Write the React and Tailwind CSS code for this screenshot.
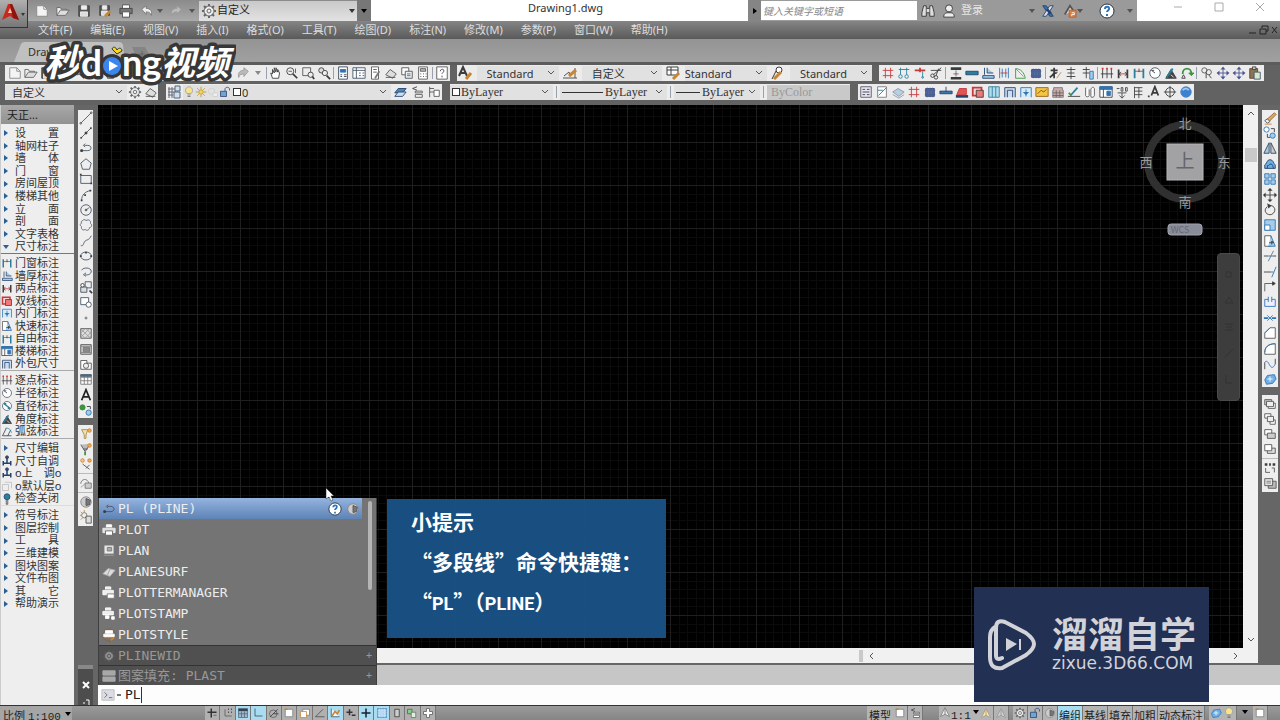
import { useState } from 'react';

const K = '#3c3c3c';
const R = '#c8383a';
const B = '#2f74b5';
const N = '#24426e';
const T = '#2b7f9b';
const G = '#3a9440';
const O = '#c98532';
const L = '#a5cdea';
const W = '#ffffff';

const circle = (x, y, r) => `M${x - r} ${y}a${r} ${r} 0 1 0 ${r * 2} 0a${r} ${r} 0 1 0 ${-r * 2} 0z`;

// each shape: [path, stroke, fill, stroke width]
const ICONS = {
  new: [['M2 2h8l4 4v8H2z', '#888', '#f4f4f4'], ['M10 2v4h4', '#888']],
  open: [['M1 13V4h4l1 2h6v2', '#666', '#eee'], ['M1 13l4-6h10l-4 6z', '#666', '#ddd']],
  save: [['M2 2h12v12H2z', '#444', '#555'], ['M5 2h6v4H5z', '#eee', '#eee'], ['M4 9h8v5H4z', '#eee', '#ddd']],
  saveas: [['M2 2h11v11H2z', '#444', '#555'], ['M5 2h5v4H5z', '#eee', '#eee'], ['M4 8h7v5H4z', '#eee', '#ddd'], ['M8 14l6-6', O, 'none', 3]],
  print: [['M4 5V1h8v4M4 10v5h8v-5', '#555', W], ['M1 5h14v6H1z', '#444', '#777'], ['M4 9h8v6H4z', '#555', W]],
  undo: [['M2 6l5-4v3c5 0 7 3 6 8-1-3-3-4-6-4v3z', '#777', '#eee']],
  redo: [['M14 6L9 2v3c-5 0-7 3-6 8 1-3 3-4 6-4v3z', '#999', '#bbb']],
  gear: [[circle(8, 8, 5), '#666', '#eee', 1], [circle(8, 8, 2), '#666'], ['M8 1v2M8 13v2M1 8h2M13 8h2M3 3l2 2M11 11l2 2M13 3l-2 2M5 11l-2 2', '#666', 'none', 2]],
  binoculars: [['M3 2h3v3h4V2h3l2 8v4h-5v-4H6v4H1v-4z', '#333', '#ddd'], ['M6 5v5M10 5v5']],
  user: [[circle(8, 5, 4), '#333', '#eee'], ['M2 15c0-5 3-5 6-5s6 0 6 5z', '#333', '#eee']],
  exchange: [['M2 2h4l8 12h-4z', N, B], ['M14 2h-4L2 14h4z', N, '#dde'], ['M7 6l4 5', N, 'none', 3]],
  cloud: [['M2 12l6-10 4 6', '#555', '#ddd', 2], ['M7 7h8v8H7z', '#a64', '#e0803a'], ['M10 10h3v2h-3v2', W]],
  help: [[circle(8, 8, 7), '#234', W, 1], ['M6 6c0-3 5-3 4 0 0 1-2 2-2 3M8 11v2', B, 'none', 2]],
  hand: [['M4 14L2 8l2 1V4l2 4V2l2 5V2l2 5V4l2 4-1 6z', K, W]],
  zoom: [[circle(6, 6, 4), K, '#eee'], ['M9 9l5 5', K, 'none', 2], ['M4 6h4M12 3v5']],
  zoomwin: [['M2 2h9v9H2z', '#555'], [circle(11, 10, 3), K, '#eee'], ['M13 12l2 3', K, 'none', 2]],
  zoomprev: [[circle(5, 5, 3), K, '#ddd'], [circle(9, 8, 3), K, '#eee'], ['M11 11l4 4', K, 'none', 2]],
  props: [['M3 1h10v14H3z', '#345', W], ['M5 4h6v3H5z', B, B], ['M5 10h2M9 10h3M5 12h2M9 12h3', '#345']],
  design: [['M1 2h14v12H1z', '#456', W], ['M1 5h14M5 2v12M8 8h2M12 8h2M8 11h2M12 11h2', '#456', 'none', 1]],
  palette: [['M4 1h8v14H4z', '#555', W], ['M6 4h4M6 7h4', '#555'], ['M8 14l5-8', '#777', 'none', 2]],
  sheet: [['M2 10l5-6 7 5-4 5z', '#555', '#ddd'], ['M2 13h11', '#555']],
  markup: [['M2 2h8v8H2z', '#555', W], ['M6 6h8v8H6z', '#555', '#eee'], ['M8 9h4M8 11h4', B]],
  calc: [['M3 1h10v14H3z', '#555', W], ['M5 3h6v3H5z', '#555', '#bbb'], ['M5 9h1M8 9h1M11 9h1M5 12h1M8 12h1M11 12h1', K]],
  boxhelp: [['M2 1h12v14H2z', '#555', W], ['M6 6c0-3 5-3 4 0 0 1-2 2-2 3M8 11v2', K]],
  textstyle: [['M2 11L6 2l4 9M3 8h6', K, 'none', 2], ['M9 14l5-6', O, 'none', 3]],
  dimstyle: [['M1 13h14M2 11l5-4 1 4M13 3v10', '#555'], ['M7 11l7-6', O, 'none', 3]],
  tablestyle: [['M2 2h11v8H2zM2 5h11M6 2v8', K, W], ['M8 14l6-6', O, 'none', 3]],
  leader: [['M2 14l4-8', K], [circle(9, 5, 3), K, W], ['M4 14l7-7', O, 'none', 3]],
  grid: [['M5 2v12M11 2v12M2 5h12M2 11h12', R]],
  axis: [['M2 4h12', R, 'none', 1], ['M4 2v8M11 2v8', T], [circle(4, 12, 2), T], [circle(11, 12, 2), T]],
  axisdel: [['M2 5h12M8 2v5', R, 'none', 2], ['M11 6v7', T], [circle(11, 13, 1), T]],
  scissor: [[circle(4, 11, 2), K], [circle(8, 13, 2), K], ['M5 10l9-8M8 11l3-8M2 5h12', K]],
  wall: [['M2 3h12M2 14h12', K, 'none', 3], ['M8 5v7', T], ['M5 9h6', R]],
  bar: [['M1 6h14v4H1z', N, T]],
  corner: [['M4 2v8M7 2v6h7M2 11h13v3H2z', N, L]],
  span: [['M3 2v12M13 2v12M6 3v10M10 3v10', B], ['M4 8h8', R]],
  arc: [['M3 14V3c6 0 10 5 11 11z', G, '#eee'], ['M3 3l9 9', O]],
  column: [['M3 4h10v9H3z', '#334b7d', '#5168a0'], ['M5 3v11M8 3v11M11 3v11M2 6h12M2 11h12', '#4a5f92']],
  char1: [['M3 5h8M7 2v6c-2 3-3 4-5 5M7 8c1 0 3 0 3-1M7 8v6', K, 'none', 2], ['M10 14l5-7', O]],
  char2: [['M3 4h10M8 1v14M4 8h8M3 12h10', K]],
  char3: [['M2 4h8M6 1v13M2 8h8', K, 'none', 1], ['M10 6h4v9h-4z', B, L]],
  dim3: [['M3 3v11M8 3v11M13 3v11', K], ['M1 9h14', K], ['M3 2v2M8 2v2M13 2v2', R, 'none', 2]],
  dim2: [['M3 4v10M13 4v10', K, 'none', 2], ['M3 9h10', R], ['M6 7l-3 2 3 2M10 7l3 2-3 2', K]],
  dim2b: [['M3 3v11M13 3v11', T, 'none', 2], ['M3 6h10', R], ['M8 3v4', K]],
  radius: [[circle(8, 8, 6), '#456', W], ['M4 5l4 3M4 5l3 0', K]],
  diameter: [[circle(8, 8, 6), '#456', W], ['M4 5l8 6M4 5h3M12 11H9', T, 'none', 2]],
  angle: [['M2 14h12L8 4z', K, '#444'], ['M3 13L10 3', T, 'none', 2], ['M8 10l3 3', W]],
  arcdim: [['M2 13L7 3M9 13l4-8M2 13h12', '#234', 'none', 1], ['M6 3c4-1 7 2 8 6', T]],
  rotate: [['M3 9c0-8 10-8 10 0', G, 'none', 2], ['M13 11l-3-3h6z', G, G], ['M2 14h4l-2-4z', K]],
  chain: [[circle(5, 5, 3), '#555'], [circle(10, 7, 3), '#555'], ['M7 8v6M10 10l3 4', K]],
  moveblue: [['M8 1v14M1 8h14', '#4a5590'], ['M8 1l3 3H5zM8 15l3-3H5zM1 8l3-3v6zM15 8l-3-3v6z', '#4a5590', '#4a5590', 0]],
  paste: [['M2 3h9v11H2z', '#543', '#8b7355'], ['M5 1h4v3H5z', K, '#ccc'], ['M7 7h7v8H7z', '#456', '#d8e8d0']],
  layer: [['M2 5h8M2 8h8M2 11h5M3 3v11M6 3v11', '#667'], ['M9 2h5v5H9zM8 8h6v6H8z', '#567', '#cfe0ee']],
  layerset: [['M2 9l4-5h9l-4 5z', N, '#4b88b8'], ['M2 13l4-5h9l-4 5z', N, '#cde']],
  layerprev: [['M8 2l-5 2 5 2', K], ['M6 7h8v2H6zM6 11h8v3H6z', '#555', W]],
  layerstate: [['M3 2v12M3 4h5M3 8h5', '#555'], ['M8 6h6v7H8z', '#555', W]],
  bulb: [['M5 10C1 5 5 1 8 1s7 4 3 9z', '#999', '#f7e48c'], ['M6 12h4M6 14h4', '#666']],
  sun: [[circle(8, 8, 3), '#b98a1a', '#f5d65c'], ['M8 1v3M8 12v3M1 8h3M12 8h3M3 3l2 2M11 11l2 2M13 3l-2 2M5 11l-2 2', '#b98a1a']],
  freeze: [[circle(6, 7, 4), '#ccc', '#e4e4dc'], ['M8 9h6v5H8z', '#ccc', '#eee']],
  unlock: [['M2 7h8v7H2z', N, '#6fa5cf'], ['M8 7V4c0-3 6-3 6 0v2', N]],
  report: [['M2 2h12v12H2z', '#556', '#e8e8f4'], ['M4 5h3M9 5h3M4 8h8M4 11h3M9 11h3', '#334']],
  editdoc: [['M3 2h10v12H3z', '#777', W], ['M3 6h6M4 12l9-9', T]],
  cloudl: [['M2 8l6-4 7 4-6 5z', '#89a', '#b9cfe0'], ['M2 11l7 4 6-4', '#89a']],
  tee: [['M1 7h14v3H1z', N, '#3f74a8'], ['M8 2v6', N]],
  stair: [['M2 11l3-7h8v7z', R, '#d55'], ['M1 13h14', N, 'none', 3]],
  redbox: [['M2 3h10v9H2z', R, '#f4d8d8', 2], ['M6 6h8v8H6z', K, '#e77']],
  window: [['M2 2h12v12H2zM6 2v12M10 2v12', T, '#b5dcea']],
  door: [['M2 14V3h12v11M5 14V6h6v8', N, '#cde']],
  doorin: [['M2 14V3h12v11M8 5v8', B, '#d5ebf8'], ['M5 8l3 3 3-3', B, B]],
  picture: [['M1 3h14v10H1z', '#965f10', '#f4c443'], ['M3 10l4-4 3 2 3-3', '#7a4d08']],
  brick: [['M3 3h10v3h1v8H2V6h1z', '#777', '#caa'], ['M2 9h12M2 12h12M6 6v8M10 6v8', '#666']],
  level: [['M1 13h14', K], ['M4 12l8-9', T, 'none', 2], ['M2 9l3 3', G, 'none', 2]],
  cyl: [['M3 3v9c0 2 4 2 4 0V5M9 5v8c0 2 4 1 4-1V4c-1-2-3-2-4 1', '#555', W]],
  blueprint: [['M1 2h14v12H1z', K, W], ['M1 2h14v3H1zM9 7h4v5H9z', B, B], ['M5 5v9', K]],
  texthalf: [['M2 4h3M7 3v4h2V3zM12 3v4h2V3zM3 9h10M8 9v6M5 12l3 3 3-3', '#444']],
  flag: [['M4 2v13M4 3h9M4 7h9M4 11h9M9 3v12', '#444']],
  aflag: [['M5 12L9 2l4 10M6 9h6', K, 'none', 2], ['M1 13h2', K, 'none', 2]],
  target: [[circle(8, 8, 5), K], ['M8 1v14M1 8h14', K]],
  globe: [[circle(8, 8, 6), '#4b86c9', '#3b82d2'], ['M4 6c3-3 6-2 7 0', L, 'none', 2]],
  line: [['M2 14L14 2'], [circle(2, 14, 1)], [circle(14, 2, 1)]],
  xline: [['M2 14L14 2'], ['M2 13h1v1H2zM7 7h2v2H7zM13 2h1v1h-1z', K, K]],
  pline: [['M2 11h8c5 0 5-6 0-6H6', '#456'], ['M2 10h2v2H2z', K, K], ['M7 3L5 5l2 2']],
  polygon: [['M8 2l6 5-2 7H4L2 7z', '#456']],
  rect: [['M2 4h12v9H2z', '#456'], ['M1 3h2M13 13h2', K, 'none', 2]],
  arc3: [['M3 14C3 8 7 4 13 3', '#456'], ['M2 13h2v2H2zM6 7h2v2H6zM12 2h2v2h-2z', K, K, 0]],
  circle: [[circle(8, 8, 6), '#456'], [circle(8, 8, 1), K], ['M8 8l4-3']],
  revcloud: [['M4 3c2-2 4-1 4 0 3-2 6 0 5 3 3 2 1 5-1 5 0 3-4 4-5 2-3 2-5-1-4-3C0 8 2 6 3 6 2 5 3 3 4 3z', '#567']],
  spline: [['M2 13c3 2 3-3 5-5s4 0 7-6', '#456']],
  ellipse: [['M2 8c0-6 12-6 12 0s-12 6-12 0z', '#456'], ['M1 7h2v2H1zM13 7h2v2h-2zM7 3h2v2H7z', K, K, 0]],
  elarc: [['M3 6c2-4 11-3 11 1 0 4-5 5-7 4', '#456'], ['M8 9l-3 2 3 2']],
  insert: [['M7 2h7v7H7z', '#456', '#eee'], ['M2 8h7v6H2z', '#456', '#ddd'], [circle(4, 6, 2), K, W], ['M12 12l3 3', K, 'none', 2]],
  block: [['M2 3h9v8H2z', '#456', W], [circle(11, 11, 3), '#456', W]],
  point: [['M7 7h2v2H7z', '#888', '#888']],
  hatch: [['M2 3h12v11H2z', '#555', '#ddd'], ['M2 8l5-5M2 13L12 3M7 14l7-7M11 14l3-3M2 3l11 11M8 3l6 6M2 9l5 5', '#999']],
  gradient: [['M2 3h12v11H2z', '#555', '#ccc'], ['M5 6h7v6H5z', '#777', '#888'], ['M2 5h12M2 12h12', '#888']],
  region: [['M2 4h7v3h5v7H2z', '#555', W], [circle(8, 10, 3), '#555', '#eee']],
  table: [['M2 3h12v11H2zM2 6h12M2 10h12M6 3v11M10 3v11', '#777', W], ['M2 3h12v2H2z', '#567', '#567']],
  mtext: [['M3 14L8 2l5 12M5 10h6', '#222', 'none', 2]],
  addsel: [[circle(4, 5, 3), G, G], [circle(11, 11, 3), B, L], ['M9 4h4v3', K]],
  bulbA: [['M3 3h7l-2 6v4H6V9z', '#a9894b', '#f4dfae'], [circle(12, 4, 2), O, '#f4a94b']],
  bulbB: [['M2 3l5 8 6-9M5 8h5', '#555', '#bbb'], [circle(12, 4, 2), O, '#f4a94b'], ['M7 11v4', G, 'none', 2]],
  bulbC: [[circle(4, 4, 2), O, '#f6c77e'], [circle(12, 4, 2), O, '#f6a94b'], ['M4 8l8 6M12 9l-4 4', '#555']],
  lock2: [['M2 9c0-6 8-7 9-1', '#777'], ['M7 8h7v6H7z', '#777', '#ccc'], ['M2 13l5-4', '#999']],
  sphere: [[circle(8, 8, 6), '#888', '#ccc'], ['M8 4l5 2-1 5-4 1z', '#555', '#777']],
  sunbox: [[circle(6, 6, 3), '#777', '#eee'], ['M6 0v3M1 6h2M2 2l2 2M2 11l2-2', O], ['M8 7h6v8H8z', '#555', '#ddd']],
  erase: [['M4 10l9-8 2 2-8 8z', '#963', '#dca86a'], ['M2 11l3-2 3 3-3 2z', '#555', '#eee'], ['M2 15h8', O]],
  copy: [[circle(4, 4, 3), B, W], [circle(11, 11, 3), B, L], ['M9 3h4v4M5 9v4h3', K]],
  mirror: [['M7 2v12H1z', '#345', L], ['M9 2v12h6z', '#345', '#ccc']],
  offset: [['M2 13V9c2 0 2-6 6-6s4 5 6 6v4z', N, '#6fb0de'], ['M5 13v-3c2 0 2-2 4-2s2 2 3 5', N]],
  array: [['M2 2h5v5H2zM9 2h5v5H9zM2 9h5v5H2zM9 9h5v5H9z', B, L]],
  move: [['M8 1v14M1 8h14', K, 'none', 1], ['M8 0l3 3H5zM8 16l3-3H5zM0 8l3-3v6zM16 8l-3-3v6z', K, K, 0]],
  rot: [['M5 4c-6 5 0 11 5 9 6-3 4-11-3-10', K], ['M5 1l4 2-3 3', K, K]],
  scale: [['M2 2h12v12H2z', B, L], ['M2 8h6v6H2z', B, W]],
  stretch: [['M2 2h7v12H2z', '#555', W], ['M9 2l5 12H6', B, L], ['M7 10h5l-2-2v4', K]],
  trim: [['M1 8h5M11 8h4', K], ['M6 14l6-12', '#678'], ['M6 8h5', B]],
  extend: [['M1 8h8', K], ['M9 8h3', B], ['M10 14l5-12', B]],
  breakat: [['M2 13V4h11', '#555'], ['M11 2l3 2-3 2z', K, K]],
  break: [['M2 13V5h4M10 5h4v8H2', B, '#eef'], ['M6 2v6M10 2v6', B]],
  join: [['M1 8h5M10 8h5', B, 'none', 2], ['M5 5l3 3-3 3M11 5L8 8l3 3', B]],
  chamfer: [['M2 14V8l6-6h6v12z', '#555', W], ['M2 8l6-6', B]],
  fillet: [['M2 14V12C2 6 6 2 14 2v12z', '#555', W], ['M2 12C2 6 6 2 14 2', B]],
  blend: [['M2 14V6M14 2v6', K], ['M2 6c5-6 6 14 12 2', B]],
  explode: [['M2 9l3-5 8-1 2 5-4 5-7 1z', B, '#6fb0e6'], ['M5 8h6M8 5v6', W]],
  front: [['M2 3h8v6H2z', '#555', '#ccc'], ['M6 7h8v6H6z', '#555', W], ['M4 5h8v6H4z', '#555', '#eee']],
  back: [['M2 2h7v5H2zM8 9h6v5H8z', '#555', W], ['M5 5h7v6H5z', '#555', '#eee']],
  above: [['M2 3h8v6H2z', '#555', W], ['M5 7h9v6H5z', '#555', '#ccc']],
  under: [['M5 7h9v6H5z', '#555', '#ddd'], ['M2 3h8v7H2z', '#555', W]],
  textfront: [['M2 4h3M7 4h2M11 4h3', K, 'none', 3], ['M3 8v5h5M10 8h3v5', '#555']],
  hatchback: [['M6 6h9v8H6z', '#555', '#bbb'], ['M2 3h9v8H2z', '#555', '#e4e4e4'], ['M4 6h5M4 8h5', '#777']],
  cross: [['M7 2v12M2 7h12', '#333', 'none', 2], ['M10 11h4', '#555']],
  snap: [['M4 3v9h9', '#555'], ['M8 3h1M12 3h1M8 7h1M12 7h1', '#333', 'none', 2]],
  gridblue: [['M2 2h12v12H2z', '#567', '#9fb6c8'], ['M2 4h12', '#345', 'none', 3], ['M2 9h12M6 6v8M10 6v8', '#567']],
  ortho: [['M4 2v10h10', '#345']],
  polar: [[circle(7, 9, 5), '#555'], ['M3 13L13 3M7 9h7', '#333']],
  osnap: [['M3 3h10v10H3z', '#777', W], ['M2 3h4', O, 'none', 2]],
  osnap3d: [['M5 3h9v8H5z', '#777', W], ['M2 6h8v8H2z', O, W]],
  track: [['M2 13L12 3M2 13h12', '#444']],
  ucs: [['M3 2v11h11', '#345', '#e8f8ff'], ['M4 12l4-6 3 3 3-5', O, 'none', 2]],
  dyn: [['M6 3v8M2 7h8M9 11h5', '#333', 'none', 2]],
  plus: [['M8 2v12M2 8h12', '#123', 'none', 2]],
  dots: [['M2 2h12v12H2z', '#4b86b8', '#9cc6ec'], ['M2 5h12M2 8h12M2 11h12M5 2v12M8 2v12M11 2v12', '#d3e8f8']],
  doc: [['M5 3h6v10H5z', '#333', '#ccc']],
  quick: [['M2 3h6v6H2z', '#555', '#8c8'], ['M7 7h6v7H7z', '#575', '#ded']],
  whiteplus: [['M6 2h4v4h4v4h-4v4H6v-4H2V6h4z', '#555', W]],
  surf: [['M1 10l6-6 8 2-6 7z', '#aaa', '#ddd'], ['M9 5l-3 7', '#999']],
  compass: [['M8 2l6 12-6-3-6 3z', '#777', '#eee'], ['M8 4v7', '#666']],
  compassOn: [['M8 2l6 12-6-3-6 3z', '#999', '#f3e9ae'], ['M8 4v7', O]],
  plan: [['M3 2h10v9H3z', '#bbb', '#eee'], ['M6 4h5v4H6z', '#777', '#aaa'], ['M2 13h12', '#999']],
  printwhite: [['M5 5V2h6v3', W, W], ['M1 6h14v5H1z', '#eee', '#ddd'], ['M4 9h8v5H4z', '#666', W]],
  manager: [['M4 4V1h6v3M1 5h12v5H1z', W, '#eee'], ['M6 9h8v5H6z', '#777', W]],
  stamp: [['M4 4V1h6v3M1 5h12v4H1z', W, '#eee'], ['M4 10h4v3H4zM11 11h3v3h-3z', W, W]],
  printcolor: [[circle(8, 8, 7), '#765', '#8a7055'], ['M4 3h8v3H4zM2 7h12v3H2z', W, W], ['M10 14l4-3', O, 'none', 2]],
  hatchrows: [['M1 2h14v5H1zM1 9h14v5H1z', '#aaa', '#a8a8a8']],
  prompt: [['M1 2h14v12H1z', '#bbb', '#dcdce4'], ['M4 5l3 3-3 3M9 11h4', '#667']],
  adjust: [['M8 3v8M3 11h10M3 8v6M13 8v6', N, 'none', 2], [circle(8, 3, 2), N, '#446']],
  faded: [['M2 6h8v8H2zM5 3h9v8', '#bbb', '#eee']],
  pin: [['M7 9v6h2V9', K], [circle(8, 5, 4), N, T]],
};

function Icon({ name, size = 'size-4' }) {
  return (
    <svg viewBox="0 0 16 16" className={`${size} shrink-0`} aria-hidden="true">
      {ICONS[name].map(([d, stroke = '#555', fill = 'none', width = 1], i) => (
        <path key={i} d={d} stroke={stroke} fill={fill} strokeWidth={width} />
      ))}
    </svg>
  );
}

function IconButton({ name, size }) {
  return (
    <button type="button" aria-label={name} className="flex items-center justify-center shrink-0">
      <Icon name={name} size={size} />
    </button>
  );
}

function IconRow({ names }) {
  return names.map((name, i) =>
    name === '|' ? <span key={i} className="mx-px h-3 w-px shrink-0 bg-gray-400" /> : <IconButton key={i} name={name} size="size-3.5 mx-px" />
  );
}

function Caret({ className = 'text-[#333]' }) {
  return (
    <svg viewBox="0 0 6 4" className={`h-1 w-1.5 shrink-0 ${className}`} aria-hidden="true">
      <path d="M0 0h6L3 4z" fill="currentColor" />
    </svg>
  );
}

function Chevron({ className = '' }) {
  return (
    <svg viewBox="0 0 8 8" className={`size-2 shrink-0 ${className}`} aria-hidden="true">
      <path d="M1 2l3 3 3-3" fill="none" stroke="#555" strokeWidth="1" />
    </svg>
  );
}

function Drop({ label, value, width, lead, font = '', muted = false }) {
  return (
    <div className={`flex h-[15px] shrink-0 items-center pr-1 ${width} ${muted ? 'bg-[#c9c9c9] text-[#999]' : 'bg-[#e1e1e1] text-[#333]'}`}>
      {lead}
      <select aria-label={label} disabled={muted} className={`min-w-0 flex-1 appearance-none bg-transparent leading-[15px] outline-none ${font}`}>
        <option>{value}</option>
      </select>
      {!muted && <Chevron />}
    </div>
  );
}

const MENUS = ['文件(F)', '编辑(E)', '视图(V)', '插入(I)', '格式(O)', '工具(T)', '绘图(D)', '标注(N)', '修改(M)', '参数(P)', '窗口(W)', '帮助(H)'];

function TitleBar() {
  return (
    <header className="flex h-[21px] shrink-0 bg-white text-[11px]">
      <div className="flex w-[371px] shrink-0 items-center bg-linear-to-b from-[#8b8b8b] to-[#a9a9a9] pl-[31px]">
        {['new', 'open', 'save', 'saveas', 'print', 'undo'].map((name) => (
          <span key={name} className="flex w-[21px] justify-center">
            <IconButton name={name} size="size-3.5" />
          </span>
        ))}
        <Caret className="text-[#555]" />
        <span className="flex w-[26px] justify-center"><IconButton name="redo" size="size-3.5" /></span>
        <Caret className="text-[#555]" />
        <div className="ml-1 flex h-5 flex-1 items-center bg-linear-to-b from-[#c9c9c9] to-[#e2e2e2] px-0.5">
          <Icon name="gear" />
          <select aria-label="工作空间" className="min-w-0 flex-1 appearance-none bg-transparent text-[#222] outline-none">
            <option>自定义</option>
          </select>
          <Caret />
        </div>
        <button type="button" aria-label="自定义快速访问工具栏" className="flex h-full w-3.5 items-center justify-center bg-[#777]">
          <Caret className="text-black" />
        </button>
      </div>
      <h1 className="flex-1 pl-3 text-center leading-4 text-[#333]">Drawing1.dwg</h1>
      <div className="flex w-[389px] shrink-0 items-center bg-[#9a9a9a]">
        <span className="flex h-full w-[13px] items-center justify-center bg-[#858585]">
          <svg viewBox="0 0 4 6" className="h-1.5 w-1"><path d="M0 0v6l4-3z" /></svg>
        </span>
        <input aria-label="搜索" placeholder="键入关键字或短语" className="h-[19px] w-[156px] bg-white px-0.5 text-[10px] italic outline-none placeholder:text-[#888]" />
        <div className="flex flex-1 items-center pl-0.5">
          <span className="flex w-[17px] justify-center"><IconButton name="binoculars" size="size-3.5" /></span>
          <span className="flex w-[25px] justify-center"><IconButton name="user" size="size-3.5" /></span>
          <button type="button" className="text-[#e8e8e8]">登录</button>
          <span className="flex-1" />
          <Caret className="text-[#555]" />
          <span className="ml-1.5 flex gap-2">
            <IconButton name="exchange" size="size-3.5" />
            <IconButton name="cloud" size="size-3.5" />
          </span>
          <Caret className="text-[#555]" />
          <span className="mx-3 ml-4 flex"><IconButton name="help" size="size-4" /></span>
          <Caret className="mr-1 text-[#555]" />
        </div>
      </div>
      <div className="grid w-[143px] shrink-0 grid-cols-3 pl-5">
        {['M1 5h8', 'M1 1h8v8H1z', 'M1 1l8 8M9 1l-8 8'].map((d, i) => (
          <button key={d} type="button" aria-label={['最小化', '最大化', '关闭'][i]} className="flex h-3.5 items-center justify-center">
            <svg viewBox="0 0 10 10" className="size-2.5"><path d={d} fill="none" stroke="#aaa" /></svg>
          </button>
        ))}
      </div>
    </header>
  );
}

function MenuBar() {
  return (
    <nav className="flex h-[18px] shrink-0 items-center gap-[18px] bg-linear-to-b from-[#858585] to-[#5a5a5a] pl-[38px] text-[11px] text-[#dedede]">
      {MENUS.map((menu) => (
        <button key={menu} type="button" className="leading-4 whitespace-nowrap">{menu}</button>
      ))}
      <svg viewBox="0 0 32 10" className="mr-px ml-auto h-2.5 w-8" aria-hidden="true">
        <path d="M2 8h7M13 4h6v5h-6zM15 3V1h6v5h-2M25 2l5 6M30 2l-5 6" fill="none" stroke="#222" strokeWidth="1" />
      </svg>
    </nav>
  );
}

function ChannelLogo() {
  return (
    <svg viewBox="0 0 200 52" className="pointer-events-none absolute top-9 left-9 z-40 h-[52px] w-[200px]" aria-hidden="true">
      <g
        className="italic"
        fontFamily="'Noto Sans CJK SC', sans-serif"
        fontWeight="700"
        fill="#fff"
        stroke="#373737"
        strokeWidth="7"
        strokeLinejoin="round"
        paintOrder="stroke"
      >
        <text x="8" y="40" fontSize="37">秒</text>
        <text x="125" y="39" fontSize="34">视频</text>
      </g>
      <g fontFamily="Lato, sans-serif" fontWeight="700" fill="#fff" stroke="#373737" strokeWidth="7" strokeLinejoin="round" paintOrder="stroke">
        <text x="45" y="40" fontSize="37">d</text>
        <text x="86" y="40" fontSize="36">ng</text>
      </g>
      <circle cx="76" cy="30" r="12" fill="#373737" />
      <circle cx="76" cy="30" r="9" fill="#3a86ee" />
      <path d="M73 25v10l9-5z" fill="#fff" />
      <path d="M81 18l-5-5c1-3 4-2 5 1 2-3 5-2 5 1z" fill="#f7d81e" stroke="#373737" />
    </svg>
  );
}

function FileTabs() {
  return (
    <div className="flex h-[26px] shrink-0 items-end border-b-[3px] border-[#5c5c5c] bg-linear-to-b from-[#949494] to-[#a0a0a0] text-[11px]">
      <div className="relative flex h-5 w-[125px] items-center">
        <svg viewBox="0 0 125 20" preserveAspectRatio="none" className="absolute inset-0 size-full">
          <path d="M14 20L21 2Q22 0 25 0H119Q122 0 123 3L125 20z" fill="#c0c0c0" />
        </svg>
        <button type="button" className="relative pl-7 text-[#333]">Drawing1</button>
      </div>
      <svg viewBox="0 0 24 16" className="ml-1.5 h-4 w-6"><path d="M1 1h13l8 14H7z" fill="#858585" /><path d="M11 5v6M8 8h6" stroke="#666" /></svg>
    </div>
  );
}

const BAR = 'flex h-4 shrink-0 items-center bg-[#ececec]';

function Toolbars() {
  return (
    <div className="flex shrink-0 flex-col gap-[3px] bg-[#626262] pb-[5px] font-['Noto_Sans','Noto_Sans_CJK_SC',sans-serif] text-[11px]">
      <div className="flex gap-[7px] pl-[5px]">
        <div className={`${BAR} w-[445px] pl-0.5`}>
          <IconRow names={['new', 'open', 'save', 'print', 'zoom', 'sheet', 'hand']} />
          <span className="flex-1" />
          <IconRow names={['redo']} />
          <Caret className="mx-1 text-[#888]" />
          <IconRow names={['|', 'hand', 'zoom', 'zoomwin', 'zoomprev', '|', 'props', 'design', 'palette', 'sheet', 'markup', 'calc', '|', 'boxhelp']} />
        </div>
        <div className={`${BAR} w-[415px] justify-between`}>
          <Icon name="textstyle" />
          <Drop label="文字样式" value="Standard" width="w-[82px]" font="pl-2.5" />
          <Icon name="dimstyle" />
          <Drop label="标注样式" value="自定义" width="w-[80px]" font="pl-2.5" />
          <Icon name="tablestyle" />
          <Drop label="表格样式" value="Standard" width="w-[82px]" />
          <Icon name="leader" />
          <Drop label="多重引线样式" value="Standard" width="w-[82px]" font="pl-2.5" />
        </div>
        <div className={`${BAR} w-[385px] justify-between px-px`}>
          <IconRow names={['grid', 'axis', 'axisdel', 'scissor', '|', 'wall', 'bar', 'corner', 'span', 'arc', 'column', '|', 'char1', 'char2', 'char3', '|', 'dim3', 'dim2', 'dim2b', 'radius', 'angle', 'rotate', '|', 'chain', 'moveblue', 'moveblue', 'paste']} />
        </div>
      </div>
      <div className="flex pl-[5px]">
        <div className={`${BAR} w-[153px]`}>
          <Drop label="工作空间" value="自定义" width="w-[122px]" font="pl-[7px]" />
          <IconRow names={['gear', 'sheet']} />
        </div>
        <div className={`${BAR} ml-2 w-[276px] gap-px`}>
          <Icon name="layer" />
          <Drop
            label="图层"
            value="0"
            width="flex-1"
            font="pl-px"
            lead={
              <>
                {['bulb', 'sun', 'freeze', 'unlock'].map((name) => <Icon key={name} name={name} size="size-3" />)}
                <span className="ml-0.5 size-2 border border-[#333] bg-white" />
              </>
            }
          />
          <IconRow names={['layerset', 'layerprev', 'layerstate']} />
        </div>
        <div className={`${BAR} ml-2 w-[400px] justify-between font-['Liberation_Serif',serif] text-xs`}>
          <Drop label="颜色" value="ByLayer" width="w-[103px]" font="pl-px" lead={<span className="ml-0.5 size-2 shrink-0 border border-[#333] bg-white" />} />
          <span className="h-3 w-px bg-gray-400" />
          <Drop label="线型" value="ByLayer" width="w-[107px]" font="pl-0.5" lead={<span className="ml-0.5 h-px w-[41px] bg-[#333]" />} />
          <span className="h-3 w-px bg-gray-400" />
          <Drop label="线宽" value="ByLayer" width="w-[86px]" font="pl-0.5" lead={<span className="ml-0.5 h-px w-6 bg-[#333]" />} />
          <span className="h-3 w-px bg-gray-400" />
          <Drop label="打印样式" value="ByColor" width="w-[83px]" font="pl-1" muted />
        </div>
        <div className={`${BAR} ml-2`}>
          <IconRow names={['report', 'editdoc', 'cloudl', 'grid', 'column', 'tee', 'stair', 'redbox', 'window', 'door', 'doorin', 'picture', 'brick', 'level', 'cyl', 'blueprint', 'texthalf', 'flag', 'aflag', 'target', 'globe']} />
        </div>
      </div>
    </div>
  );
}

const SIDE_GROUPS = [
  {
    height: 'h-[127px]',
    line: 'border-b border-[#777]',
    items: ['设　　置', '轴网柱子', '墙　　体', '门　　窗', '房间屋顶', '楼梯其他', '立　　面', '剖　　面', '文字表格', '尺寸标注'],
    icons: [],
  },
  {
    height: 'h-[114px]',
    line: 'border-b border-[#aaa]',
    items: ['门窗标注', '墙厚标注', '两点标注', '双线标注', '内门标注', '快速标注', '自由标注', '楼梯标注', '外包尺寸'],
    icons: ['dim2b', 'corner', 'dim2', 'redbox', 'doorin', 'stretch', 'dim2b', 'blueprint', 'door'],
  },
  {
    height: 'h-[65px]',
    line: 'border-b border-[#aaa]',
    items: ['逐点标注', '半径标注', '直径标注', '角度标注', '弧弦标注'],
    icons: ['dim3', 'radius', 'diameter', 'angle', 'arcdim'],
  },
  {
    height: 'h-[64px]',
    line: 'border-b border-[#ddd]',
    items: ['尺寸编辑', '尺寸自调', 'o上　调o', 'o默认层o', '检查关闭'],
    icons: [null, 'adjust', 'adjust', 'faded', 'pin'],
  },
  {
    height: 'h-[101px]',
    line: '',
    items: ['符号标注', '图层控制', '工　　具', '三维建模', '图块图案', '文件布图', '其　　它', '帮助演示'],
    icons: [],
  },
];

function SidePanel() {
  return (
    <aside className="flex w-[74px] shrink-0 flex-col border-l border-[#ccc] bg-[#eeeeee] text-[11px] text-[#333]">
      <h2 className="h-[19px] bg-linear-to-b from-[#a8a8a8] to-[#929292] pl-1.5 leading-[19px] text-[#222]">天正...</h2>
      <div className="flex flex-col gap-[3px] pt-[3px]">
        {SIDE_GROUPS.map((group) => (
          <ul key={group.height} className={`grid auto-rows-fr ${group.height} ${group.line}`}>
            {group.items.map((item, i) => (
              <li key={item} className="min-h-0">
                <button type="button" className="flex h-full items-center whitespace-nowrap">
                  <span className="flex w-[14px] shrink-0">
                    {group.icons[i] ? (
                      <Icon name={group.icons[i]} size="size-3" />
                    ) : (
                      <svg viewBox="0 0 6 6" className="ml-0.5 size-1.5">
                        <path d={item === '尺寸标注' ? 'M0 1h6L3 5z' : 'M1 0v6l4-3z'} fill="#2a5f94" />
                      </svg>
                    )}
                  </span>
                  {item}
                </button>
              </li>
            ))}
          </ul>
        ))}
      </div>
    </aside>
  );
}

const DRAW_TOOLS = ['line', 'xline', 'pline', 'polygon', 'rect', 'arc3', 'circle', 'revcloud', 'spline', 'ellipse', 'elarc', 'insert', 'block', 'point', 'hatch', 'gradient', 'region', 'table', 'mtext', 'addsel'];
const MODIFY_TOOLS = ['erase', 'copy', 'mirror', 'offset', 'array', 'move', 'rot', 'scale', 'stretch', 'trim', 'extend', 'breakat', 'break', 'join', 'chamfer', 'fillet', 'blend', 'explode'];

function ToolColumn({ names, height }) {
  return (
    <div className={`grid auto-rows-fr justify-items-center bg-[#eeeeee] ${height}`}>
      {names.map((name) => <IconButton key={name} name={name} size="size-3.5" />)}
    </div>
  );
}

function ToolStack({ groups }) {
  return (
    <div className="flex flex-col bg-[#eeeeee]">
      {groups.map((group, i) => (
        <div key={i} className={`flex flex-col items-center gap-px py-0.5 ${i > 0 ? 'border-t border-[#bbb]' : ''}`}>
          {group.map((name) => <IconButton key={name} name={name} size="size-3.5" />)}
        </div>
      ))}
    </div>
  );
}

function ViewCube() {
  return (
    <svg viewBox="0 0 94 120" className="absolute top-[11px] right-[11px] h-[120px] w-[94px]" fontFamily="'Noto Sans CJK SC', sans-serif" textAnchor="middle">
      <circle cx="47" cy="46" r="37" fill="none" stroke="#303030" strokeWidth="8" />
      <g fill="#989898" fontSize="13">
        <text x="47" y="12">北</text>
        <text x="86" y="51">东</text>
        <text x="47" y="91">南</text>
        <text x="8" y="51">西</text>
      </g>
      <rect x="29" y="28" width="36" height="36" fill="#a2a2a4" stroke="#b6b6b8" />
      <text x="47" y="52" fontSize="19" fill="#66666a">上</text>
      <rect x="30" y="108" width="34" height="11" rx="3" fill="#898c99" stroke="#a2a4ad" />
      <text x="42" y="117" fontSize="9" fill="#666873">WCS</text>
    </svg>
  );
}

function Canvas() {
  return (
    <main className="relative min-w-0 flex-1 overflow-hidden bg-black">
      <svg className="absolute inset-0 size-full" aria-hidden="true">
        <defs>
          <pattern id="grid" x="13" y="37" width="43" height="43" patternUnits="userSpaceOnUse">
            <path d="M9 0v43M17 0v43M26 0v43M34 0v43M0 9h43M0 17h43M0 26h43M0 34h43" stroke="#0b0b0b" shapeRendering="crispEdges" />
            <path d="M0 0v43M0 0h43" stroke="#1f1f1f" strokeWidth="2" shapeRendering="crispEdges" />
          </pattern>
        </defs>
        <rect width="100%" height="100%" fill="url(#grid)" />
      </svg>
      <ViewCube />
      <div className="absolute top-[148px] right-[3px] flex h-[148px] w-[23px] flex-col items-center justify-around rounded-sm border border-[#4a4a4a] bg-[#3d3d3d] py-2">
        {['M3 3h5v5H3z', 'M2 8l4-6 4 6z', 'M2 3h8M3 6h6M2 9h8', 'M2 10l8-8', 'M3 2v8h6'].map((d) => (
          <svg key={d} viewBox="0 0 12 12" className="size-3"><path d={d} fill="none" stroke="#323232" /></svg>
        ))}
      </div>
      <section lang="zh-CN" className="absolute bottom-[10px] left-[289px] h-[139px] w-[279px] bg-[#1a5288]/95 pt-0.5 pl-6 font-['Noto_Sans_CJK_SC',sans-serif] text-[21px] leading-10 font-bold whitespace-nowrap text-white">
        <p>小提示</p>
        <p>“多段线”命令快捷键：</p>
        <p>
          “<span className="font-['Roboto',sans-serif] text-lg">PL</span>”（<span className="font-['Roboto',sans-serif] text-lg">PLINE</span>）
        </p>
      </section>
      <svg viewBox="0 0 10 14" className="absolute bottom-[146px] left-[227px] z-30 h-3.5 w-2.5" aria-hidden="true">
        <path d="M1 0v11l3-2 2 4 2-1-2-4h3z" fill="#fff" stroke="#222" strokeWidth="0.5" />
      </svg>
    </main>
  );
}

const SUGGESTIONS = [
  { icon: 'printwhite', text: 'PLOT' },
  { icon: 'plan', text: 'PLAN' },
  { icon: 'surf', text: 'PLANESURF' },
  { icon: 'manager', text: 'PLOTTERMANAGER' },
  { icon: 'stamp', text: 'PLOTSTAMP' },
  { icon: 'printcolor', text: 'PLOTSTYLE' },
];

function CommandLine() {
  const [command, setCommand] = useState('PL');

  return (
    <div className="relative flex h-5 shrink-0 items-center bg-[#fdfdfd] pl-[3px] font-['DejaVu_Sans_Mono','Noto_Sans_CJK_SC',monospace] text-[13px]">
      <Icon name="prompt" size="size-3.5" />
      <span className="ml-0.5 h-0.5 w-1 bg-[#777]" />
      <div className="ml-1 flex h-full flex-1 items-center">
        <input aria-label="命令" value={command} onChange={(e) => setCommand(e.target.value)} className="w-4 bg-transparent text-[#222] outline-none" />
        <span className="h-4 w-px bg-[#333]" />
      </div>
      <div className="absolute bottom-full left-0 z-20 w-[279px] border-x border-[#3f3f3f] bg-[#747474] text-[#ededed]">
        <div className="flex">
          <ul className="flex-1">
            <li className="flex h-[21px] items-center gap-0.5 bg-linear-to-b from-[#94b4e0] to-[#5e83b5] pr-0.5 pl-[3px]">
              <Icon name="pline" size="size-3.5" />
              <button type="button" className="flex-1 text-left">PL (PLINE)</button>
              <IconButton name="help" size="size-3.5 mr-0.5" />
              <IconButton name="sphere" size="size-3.5" />
            </li>
            {SUGGESTIONS.map((row) => (
              <li key={row.text} className="flex h-[21px] items-center gap-0.5 pl-[3px]">
                <Icon name={row.icon} size="size-3.5" />
                <button type="button">{row.text}</button>
              </li>
            ))}
          </ul>
          <div className="w-3.5 pt-[3px] pl-1.5">
            <div className="h-[89px] w-1 rounded-sm bg-[#b5b5b5]" />
          </div>
        </div>
        <button type="button" className="flex h-5 w-full items-center gap-0.5 border-t border-[#333] bg-[#505050] pr-1 pl-[3px] text-[#989898]">
          <Icon name="gear" size="size-3.5 opacity-40" />
          <span className="flex-1 text-left">PLINEWID</span>
          <span className="text-[10px]">+</span>
        </button>
        <button type="button" className="flex h-5 w-full items-center gap-0.5 border-t border-[#333] bg-[#505050] pr-1 pl-[3px] text-[#989898]">
          <Icon name="hatchrows" size="size-3.5" />
          <span className="flex-1 text-left">图案填充: PLAST</span>
          <span className="text-[10px]">+</span>
        </button>
      </div>
    </div>
  );
}

const MODES = [
  ['cross'], ['snap'], ['gridblue', true], ['ortho', true], ['polar'], ['osnap'], ['osnap3d'], ['track'],
  ['ucs', true], ['dyn'], ['plus', true], ['dots', true], ['doc'], ['quick'], ['whiteplus'],
];

function StatusBar() {
  const cell = 'flex h-full shrink-0 items-center border-r border-[#777] bg-[#b4b4b4] px-[1px]';
  return (
    <footer className="flex h-[15px] shrink-0 items-start overflow-hidden border-t border-[#333] bg-linear-to-b from-[#9a9a9a] to-[#858585] text-[11px] leading-5 text-[#222]">
      <button type="button" className="flex h-full w-[72px] shrink-0 items-start gap-1 bg-[#a5a5a5] pl-[3px] whitespace-nowrap">
        <span>比例 <span className="font-['Liberation_Mono',monospace]">1:100</span></span>
        <span className="flex pt-1.5"><Caret className="text-black" /></span>
      </button>
      <div className="ml-[133px] grid h-full w-[231px] grid-cols-15">
        {MODES.map(([name, on]) => (
          <button key={name} type="button" aria-label={name} className={`flex h-full items-center justify-center border-r border-[#777] ${on ? 'bg-[#a9dcf0]' : 'bg-[#b0b0b0]'}`}>
            <Icon name={name} size="size-3" />
          </button>
        ))}
      </div>
      <span className="flex-1" />
      <button type="button" className="h-full shrink-0 bg-[#b4b4b4] px-0.5 leading-5">模型</button>
      <span className={cell}><Icon name="osnap" size="size-3" /></span>
      <span className={`${cell} mr-4`}><Icon name="layerprev" size="size-3" /></span>
      <button type="button" className="flex h-full w-10 items-start bg-[#b4b4b4]">
        <Icon name="compass" size="size-3" />
        <span className="font-['Liberation_Mono',monospace]">1:1</span>
        <span className="flex pt-1 pl-0.5"><Caret className="text-black" /></span>
      </button>
      <span className={cell}><Icon name="compassOn" size="size-3" /></span>
      <span className={`${cell} mr-1`}><Icon name="compass" size="size-3 opacity-50" /></span>
      <span className={cell}><Icon name="gear" size="size-3" /></span>
      <span className={cell}><Icon name="unlock" size="size-3" /></span>
      <span className={cell}><Icon name="sphere" size="size-3" /></span>
      {['编组', '基线', '填充', '加粗', '动态标注'].map((name, i) => (
        <button key={name} type="button" className={`h-full shrink-0 border-r border-[#777] px-px leading-5 ${i === 0 ? 'bg-[#a9dcf0]' : 'bg-[#b4b4b4]'}`}>{name}</button>
      ))}
      <span className={`${cell} ml-1 gap-px`}><Icon name="explode" size="size-3" /><Icon name="bulb" size="size-3" /></span>
      <span className="flex w-4 justify-center pt-1"><Caret className="text-black" /></span>
      <span className={`${cell} mr-3`}><Icon name="osnap" size="size-3" /></span>
    </footer>
  );
}

function Watermark() {
  return (
    <div className="absolute right-[71px] bottom-[18px] z-50 flex h-[115px] w-[235px] items-center gap-4 bg-[#223053] pl-3.5 text-[#d2d3d9]">
      <svg viewBox="0 0 48 52" className="h-[52px] w-12 shrink-0" aria-hidden="true">
        <path d="M7 8Q2 11 2 18v20q0 13 12 11l24-13q8-6 8-11t-8-11L17 3Q8 0 8 9v27q0 6 6 3" fill="none" stroke="currentColor" strokeWidth="4" strokeLinecap="round" />
        <path d="M18 19v13l11-7z" fill="currentColor" />
        <path d="M32 20v11" stroke="currentColor" strokeWidth="2" />
      </svg>
      <div className="whitespace-nowrap">
        <p className="text-4xl leading-9 font-bold">溜溜自学</p>
        <p className="font-['DejaVu_Sans',sans-serif] text-[17px] leading-5">zixue.3D66.COM</p>
      </div>
    </div>
  );
}

export default function App() {
  return (
    <div className="relative flex h-screen flex-col overflow-hidden bg-[#666] font-['Noto_Sans','Noto_Sans_CJK_SC',sans-serif]">
      <button type="button" aria-label="应用程序菜单" className="absolute top-0 left-0 z-30 flex h-7 w-7 items-center justify-center border-r border-b border-[#333] bg-linear-to-b from-[#b0b0b0] to-[#777]">
        <svg viewBox="0 0 28 28" className="size-7 shrink-0">
          <path d="M2 20L8 4h4l7 16-6-2-3-2-4 2z" fill="#c9281c" />
          <path d="M10 4h2l7 16-6-2z" fill="#8d150e" />
          <path d="M8 13l2-5 2 5z" fill="#f3c9bb" />
          <path d="M21 13h4l-2 3z" fill="#333" />
        </svg>
      </button>
      <TitleBar />
      <MenuBar />
      <FileTabs />
      <Toolbars />
      <ChannelLogo />
      <div className="flex min-h-0 flex-1">
        <SidePanel />
        <div className="flex w-6 shrink-0 flex-col gap-[7px] bg-[#666] pt-[5px] pr-[5px] pl-1">
          <ToolColumn names={DRAW_TOOLS} height="h-[308px]" />
          <ToolStack groups={[['bulbA', 'bulbB', 'bulbC'], ['lock2'], ['sphere', 'sunbox']]} />
          <div className="mt-auto flex h-10 flex-col items-center justify-between border-t-4 border-[#888] bg-[#4d4d4d] pt-3">
            <svg viewBox="0 0 8 8" className="size-2"><path d="M1 1l6 6M7 1L1 7" stroke="#fff" strokeWidth="2" /></svg>
            <svg viewBox="0 0 8 8" className="size-2"><path d="M1 6h2M4 3h3v5" stroke="#fff" fill="none" /></svg>
          </div>
        </div>
        <div className="flex min-w-0 flex-1 flex-col">
          <div className="flex min-h-0 flex-1">
            <div className="flex min-w-0 flex-1 flex-col">
              <div className="flex min-h-0 flex-1">
                <Canvas />
                <div className="flex w-[15px] shrink-0 flex-col items-center bg-[#f1f1f1] py-1">
                  <Chevron className="rotate-180" />
                  <div className="mt-[31px] h-3.5 w-3 bg-[#c9c9c9]" />
                  <Chevron className="mt-auto" />
                </div>
              </div>
              <div className="flex h-[15px] shrink-0 items-center bg-[#f1f1f1] pr-[18px]">
                <span className="w-2/3" />
                <span className="h-3 w-1 bg-[#c9c9c9]" />
                <Chevron className="ml-1 rotate-90" />
                <Chevron className="ml-auto -rotate-90" />
              </div>
            </div>
            <div className="flex w-[22px] shrink-0 flex-col gap-2 bg-[#666] pt-[5px] pr-0.5 pl-1">
              <ToolColumn names={MODIFY_TOOLS} height="h-[277px]" />
              <ToolStack groups={[['front', 'back', 'above', 'under'], ['textfront', 'hatchback']]} />
            </div>
          </div>
          <div className="h-[22px] shrink-0 border-t-2 border-[#666] bg-[#c6c6c6]" />
          <CommandLine />
        </div>
      </div>
      <StatusBar />
      <Watermark />
    </div>
  );
}
